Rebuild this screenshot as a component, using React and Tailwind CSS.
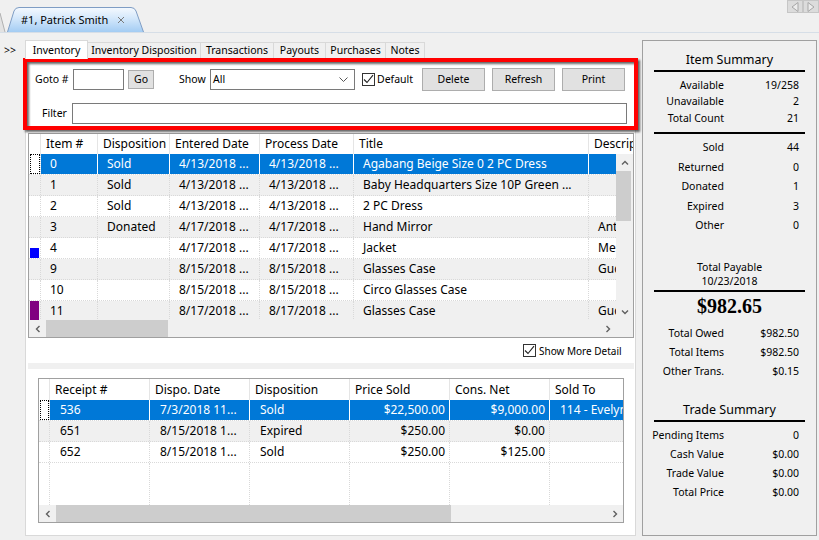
import React from "react";

const UP = "M1 5.5 L4 2.5 L7 5.5";
const DOWN = "M1 2.5 L4 5.5 L7 2.5";
const LEFT = "M5.5 1 L2.5 4 L5.5 7";
const RIGHT = "M2.5 1 L5.5 4 L2.5 7";

function Chev({ d }) {
  return (
    <svg width="8" height="8" viewBox="0 0 8 8">
      <path d={d} fill="none" stroke="#606060" strokeWidth="1.4" />
    </svg>
  );
}

function CheckBox() {
  return (
    <span className="w-[13px] h-[13px] border border-[#333333] bg-white flex items-center justify-center shrink-0">
      <svg width="11" height="11" viewBox="0 0 11 11">
        <path d="M1 5.5 L4 8.5 L10 1.2" fill="none" stroke="#222222" strokeWidth="1.1" />
      </svg>
    </span>
  );
}

function DocTab() {
  return (
    <div className="relative mt-[7px] w-[137px] h-[25px] flex items-center pl-[14px]">
      <svg className="absolute inset-0" width="137" height="25" viewBox="0 0 137 25">
        <defs>
          <linearGradient id="tabg" x1="0" y1="0" x2="0" y2="1">
            <stop offset="0" stopColor="#f5f9fe" />
            <stop offset="0.45" stopColor="#d3e7fb" />
            <stop offset="1" stopColor="#a3ccf3" />
          </linearGradient>
        </defs>
        <path
          d="M0.5 25 L7 4 Q8.3 0.5 12 0.5 L124 0.5 Q127.7 0.5 129 4 L136.5 25"
          fill="url(#tabg)"
          stroke="#7f9dc4"
        />
      </svg>
      <span className="relative text-[11px] text-black whitespace-nowrap">#1, Patrick Smith</span>
      <svg className="relative ml-[9px]" width="8" height="8" viewBox="0 0 8 8">
        <path d="M1 1 L7 7 M7 1 L1 7" stroke="#7a7a7a" strokeWidth="1" />
      </svg>
    </div>
  );
}

function NavArrows() {
  return (
    <div className="flex self-start">
      <div className="w-[16px] h-[13px] bg-[#dcdcdc] border border-[#c6c6c6] flex items-center justify-center">
        <svg width="8" height="10" viewBox="0 0 8 10">
          <path d="M7 0.5 L1 5 L7 9.5 Z" fill="#ececec" stroke="#a6a6a6" />
        </svg>
      </div>
      <div className="w-[16px] h-[13px] bg-[#dcdcdc] border border-[#c6c6c6] flex items-center justify-center">
        <svg width="8" height="10" viewBox="0 0 8 10">
          <path d="M1 0.5 L7 5 L1 9.5 Z" fill="#ececec" stroke="#a6a6a6" />
        </svg>
      </div>
    </div>
  );
}

const SUBTABS = [
  { t: "Inventory", w: "w-[63px]", sel: true },
  { t: "Inventory Disposition", w: "w-[113px]" },
  { t: "Transactions", w: "w-[73px]" },
  { t: "Payouts", w: "w-[52px]" },
  { t: "Purchases", w: "w-[60px]" },
  { t: "Notes", w: "w-[39px]" },
];

const UW = ["w-[12px]", "w-[57px]", "w-[72px]", "w-[90px]", "w-[94px]", "w-[235px]", "w-[100px]"];
const UHEAD = ["", "Item #", "Disposition", "Entered Date", "Process Date", "Title", "Descrip"];
const UROWS = [
  { n: "0", d: "Sold", e: "4/13/2018 ...", p: "4/13/2018 ...", t: "Agabang Beige Size 0 2 PC Dress", x: "", sel: true },
  { n: "1", d: "Sold", e: "4/13/2018 ...", p: "4/13/2018 ...", t: "Baby Headquarters Size 10P Green ...", x: "" },
  { n: "2", d: "Sold", e: "4/13/2018 ...", p: "4/13/2018 ...", t: "2 PC Dress", x: "" },
  { n: "3", d: "Donated", e: "4/17/2018 ...", p: "4/17/2018 ...", t: "Hand Mirror", x: "Antique" },
  { n: "4", d: "", e: "4/17/2018 ...", p: "4/17/2018 ...", t: "Jacket", x: "Mens", mark: "blue" },
  { n: "9", d: "", e: "8/15/2018 ...", p: "8/15/2018 ...", t: "Glasses Case", x: "Gucci" },
  { n: "10", d: "", e: "8/15/2018 ...", p: "8/15/2018 ...", t: "Circo Glasses Case", x: "" },
  { n: "11", d: "", e: "8/17/2018 ...", p: "8/17/2018 ...", t: "Glasses Case", x: "Gucci", mark: "purple" },
];

const LW = ["w-[11px]", "w-[100px]", "w-[100px]", "w-[100px]", "w-[100px]", "w-[100px]", "w-[100px]"];
const LHEAD = ["", "Receipt #", "Dispo. Date", "Disposition", "Price Sold", "Cons. Net", "Sold To"];
const LROWS = [
  { c: ["536", "7/3/2018 11...", "Sold", "$22,500.00", "$9,000.00", "114 - Evelyn Rogers"], sel: true },
  { c: ["651", "8/15/2018 1...", "Expired", "$250.00", "$0.00", ""] },
  { c: ["652", "8/15/2018 1...", "Sold", "$250.00", "$125.00", ""] },
];

function UpperGrid() {
  return (
    <div className="ml-[2px] mt-[9px] w-[606px] h-[205px] border border-[#a0a0a0] flex flex-col text-[12px] shrink-0">
      <div className="flex h-[20px] bg-white overflow-hidden shrink-0">
        {UHEAD.map((t, i) => (
          <div
            key={i}
            className={`${UW[i]} shrink-0 h-full border-r border-[#e5e5e5] pl-[5px] flex items-center whitespace-nowrap overflow-hidden`}
          >
            {t}
          </div>
        ))}
      </div>
      <div className="flex h-[166px] shrink-0">
        <div className="w-[587px] h-full overflow-hidden flex flex-col">
          {UROWS.map((r, i) => {
            const alt = i % 2 === 1 ? "bg-[#f0f0f0]" : "bg-white";
            const cells = [r.n, r.d, r.e, r.p, r.t, r.x];
            return (
              <div key={i} className={`flex h-[21px] shrink-0 border-b border-dotted border-[#d9d9d9] ${alt}`}>
                <div className="w-[12px] shrink-0 h-full border-r border-dotted border-[#d9d9d9] flex items-end">
                  {r.sel && <div className="ml-[1px] w-[10px] h-full border border-dotted border-black" />}
                  {r.mark === "blue" && <div className="ml-[1px] w-[9px] h-[10px] bg-[#0000ff]" />}
                  {r.mark === "purple" && <div className="ml-[1px] w-[9px] h-full bg-[#800080]" />}
                </div>
                {cells.map((c, j) => (
                  <div
                    key={j}
                    className={`${UW[j + 1]} shrink-0 h-full pl-[9px] flex items-center whitespace-nowrap overflow-hidden border-r ${
                      r.sel ? "bg-[#0078d7] text-white border-solid border-white" : "border-dotted border-[#d9d9d9]"
                    }`}
                  >
                    {c}
                  </div>
                ))}
              </div>
            );
          })}
        </div>
        <div className="w-[17px] h-full bg-[#f0f0f0] flex flex-col">
          <div className="h-[17px] flex items-center justify-center">
            <Chev d={UP} />
          </div>
          <div className="h-[50px] w-[15px] bg-[#cdcdcd]" />
          <div className="flex-1" />
          <div className="h-[17px] flex items-center justify-center">
            <Chev d={DOWN} />
          </div>
        </div>
      </div>
      <div className="flex h-[17px] shrink-0 bg-[#f0f0f0]">
        <div className="w-[587px] flex">
          <div className="w-[17px] flex items-center justify-center">
            <Chev d={LEFT} />
          </div>
          <div className="w-[122px] bg-[#cdcdcd]" />
          <div className="flex-1" />
          <div className="w-[17px] flex items-center justify-center">
            <Chev d={RIGHT} />
          </div>
        </div>
        <div className="w-[17px]" />
      </div>
    </div>
  );
}

function LowerGrid() {
  return (
    <div className="ml-[12px] w-[586px] h-[145px] border border-[#a0a0a0] flex flex-col text-[12px] shrink-0 bg-white">
      <div className="flex h-[21px] bg-white overflow-hidden shrink-0">
        {LHEAD.map((t, i) => (
          <div
            key={i}
            className={`${LW[i]} shrink-0 h-full border-r border-[#e5e5e5] pl-[5px] flex items-center whitespace-nowrap overflow-hidden`}
          >
            {t}
          </div>
        ))}
      </div>
      <div className="flex flex-col overflow-hidden w-[584px]">
        {LROWS.map((r, i) => {
          const alt = i % 2 === 1 ? "bg-[#f0f0f0]" : "bg-white";
          return (
            <div key={i} className={`flex h-[21px] shrink-0 border-b border-dotted border-[#d9d9d9] ${alt}`}>
              <div className="w-[11px] shrink-0 h-full border-r border-dotted border-[#d9d9d9] flex">
                {r.sel && <div className="ml-[1px] w-[9px] h-full border border-dotted border-black" />}
              </div>
              {r.c.map((c, j) => {
                const right = j === 3 || j === 4;
                return (
                  <div
                    key={j}
                    className={`${LW[j + 1]} shrink-0 h-full flex items-center whitespace-nowrap overflow-hidden border-r ${
                      right ? "justify-end pr-[4px]" : "pl-[10px]"
                    } ${r.sel ? "bg-[#0078d7] text-white border-solid border-white" : "border-dotted border-[#d9d9d9]"}`}
                  >
                    {c}
                  </div>
                );
              })}
            </div>
          );
        })}
        <div className="flex h-[42px] shrink-0">
          {LW.map((w, i) => (
            <div key={i} className={`${w} shrink-0 h-full border-r border-dotted border-[#d9d9d9]`} />
          ))}
        </div>
      </div>
      <div className="flex h-[17px] shrink-0 bg-[#f0f0f0]">
        <div className="w-[17px] flex items-center justify-center">
          <Chev d={LEFT} />
        </div>
        <div className="w-[395px] bg-[#cdcdcd]" />
        <div className="flex-1" />
        <div className="w-[17px] flex items-center justify-center">
          <Chev d={RIGHT} />
        </div>
      </div>
    </div>
  );
}

function Btn({ children, w, h }) {
  return (
    <div className={`${w} ${h} bg-[#e1e1e1] border border-[#adadad] flex items-center justify-center shrink-0`}>
      {children}
    </div>
  );
}

function Panel() {
  return (
    <div className="ml-[25px] w-[611px] h-[478px] border border-[#d9d9d9] bg-white flex flex-col">
      {/* toolbar row 1 */}
      <div className="mt-[9px] h-[23px] flex items-center pl-[9px] text-[10.5px] shrink-0">
        <span className="w-[38px] shrink-0 whitespace-nowrap">Goto #</span>
        <div className="w-[51px] h-[21px] bg-white border border-[#7a7a7a] shrink-0" />
        <div className="ml-[4px]">
          <Btn w="w-[26px]" h="h-[19px]">Go</Btn>
        </div>
        <span className="ml-[25px] w-[31px] shrink-0">Show</span>
        <div className="w-[145px] h-[21px] bg-white border border-[#7a7a7a] flex items-center justify-between pl-[2px] pr-[6px] shrink-0">
          <span>All</span>
          <svg width="9" height="5" viewBox="0 0 9 5">
            <path d="M0.5 0.5 L4.5 4.5 L8.5 0.5" fill="none" stroke="#555555" strokeWidth="1" />
          </svg>
        </div>
        <div className="ml-[7px]">
          <CheckBox />
        </div>
        <span className="ml-[2px] w-[45px] shrink-0">Default</span>
        <Btn w="w-[63px]" h="h-[23px]">Delete</Btn>
        <div className="ml-[7px]">
          <Btn w="w-[63px]" h="h-[23px]">Refresh</Btn>
        </div>
        <div className="ml-[7px]">
          <Btn w="w-[63px]" h="h-[23px]">Print</Btn>
        </div>
      </div>
      {/* toolbar row 2 */}
      <div className="mt-[12px] h-[21px] flex items-center pl-[16px] text-[10.5px] shrink-0">
        <span className="w-[30px] shrink-0">Filter</span>
        <div className="w-[555px] h-[21px] bg-white border border-[#7a7a7a]" />
      </div>
      <UpperGrid />
      <div className="h-[25px] flex items-center pl-[497px] text-[10px] shrink-0">
        <CheckBox />
        <span className="ml-[3px] whitespace-nowrap">Show More Detail</span>
      </div>
      <div className="ml-[2px] w-[606px] h-[6px] bg-[#f0f0f0] shrink-0" />
      <div className="mt-[9px]">
        <LowerGrid />
      </div>
    </div>
  );
}

function SRow({ label, value, h }) {
  return (
    <div className={`flex items-center ${h} shrink-0`}>
      <span className="w-[81px] text-right whitespace-nowrap">{label}</span>
      <span className="w-[75px] text-right whitespace-nowrap">{value}</span>
    </div>
  );
}

function Summary() {
  return (
    <div className="ml-[6px] mt-[7px] w-[175px] h-[496px] border border-[#a0a0a0] flex flex-col text-[10.5px] shrink-0">
      <div className="mt-[9px] h-[20px] flex items-center justify-center text-[12.5px] shrink-0">Item Summary</div>
      <div className="mx-[11px] h-[2px] bg-black shrink-0" />
      <div className="mt-[5px]" />
      <SRow label="Available" value="19/258" h="h-[16px]" />
      <SRow label="Unavailable" value="2" h="h-[17px]" />
      <SRow label="Total Count" value="21" h="h-[17px]" />
      <div className="mt-[5px] mx-[11px] h-[2px] bg-black shrink-0" />
      <div className="mt-[4px]" />
      <SRow label="Sold" value="44" h="h-[19px]" />
      <SRow label="Returned" value="0" h="h-[20px]" />
      <SRow label="Donated" value="1" h="h-[19px]" />
      <SRow label="Expired" value="3" h="h-[20px]" />
      <SRow label="Other" value="0" h="h-[19px]" />
      <div className="mt-[25px] h-[14px] flex items-center justify-center shrink-0">Total Payable</div>
      <div className="h-[14px] flex items-center justify-center shrink-0">10/23/2018</div>
      <div className="mt-[2px] mx-[11px] h-[2px] bg-black shrink-0" />
      <div className="mt-[1px] h-[26px] flex items-center justify-center font-['Liberation_Serif',serif] font-bold text-[20px] shrink-0">
        $982.65
      </div>
      <div className="mt-[5px]" />
      <SRow label="Total Owed" value="$982.50" h="h-[19px]" />
      <SRow label="Total Items" value="$982.50" h="h-[19px]" />
      <SRow label="Other Trans." value="$0.15" h="h-[19px]" />
      <div className="mt-[20px] h-[19px] flex items-center justify-center text-[12.5px] shrink-0">Trade Summary</div>
      <div className="mx-[11px] h-[2px] bg-black shrink-0" />
      <div className="mt-[4px]" />
      <SRow label="Pending Items" value="0" h="h-[19px]" />
      <SRow label="Cash Value" value="$0.00" h="h-[19px]" />
      <SRow label="Trade Value" value="$0.00" h="h-[19px]" />
      <SRow label="Total Price" value="$0.00" h="h-[19px]" />
    </div>
  );
}

export default function App() {
  return (
    <div className="relative w-[819px] h-[540px] overflow-hidden bg-[#f0f0f0] text-black font-['Noto_Sans',sans-serif] leading-none">
      {/* top strip */}
      <div className="h-[33px] border-b border-[#d6dee7] flex justify-between">
        <div className="flex">
          <svg width="7" height="32" viewBox="0 0 7 32" className="shrink-0">
            <path d="M0 13 L0 32 L5 32 Z" fill="#e2e2e2" />
            <path d="M0 13 L5 32" stroke="#b0b0b0" fill="none" />
          </svg>
          <DocTab />
        </div>
        <NavArrows />
      </div>
      {/* body */}
      <div className="flex">
        <div className="w-[636px] shrink-0 pt-[7px]">
          <div className="flex items-end h-[18px]">
            <div className="w-[25px] h-full pl-[4px] pt-[3px] flex items-center text-[10.5px] shrink-0">&gt;&gt;</div>
            {SUBTABS.map((s, i) => (
              <div
                key={i}
                className={`${s.w} shrink-0 flex items-center justify-center text-[10.5px] whitespace-nowrap border-t border-r border-[#d9d9d9] ${
                  i === 0 ? "border-l" : ""
                } ${s.sel ? "h-[19px] -mb-[1px] bg-white relative z-10" : "h-[16px] bg-[#f0f0f0]"}`}
              >
                {s.t}
              </div>
            ))}
          </div>
          <Panel />
        </div>
        <Summary />
      </div>
      {/* red annotation box */}
      <div className="absolute left-[23px] top-[58px] w-[615px] h-[72px] border-[4px] border-[#ff0000] [filter:drop-shadow(2px_2px_1px_rgba(0,0,0,0.6))]" />
    </div>
  );
}
